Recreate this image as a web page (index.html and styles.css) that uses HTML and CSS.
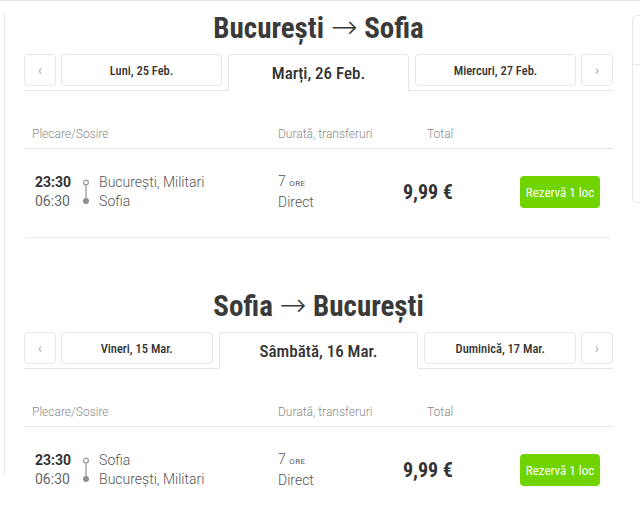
FILE: index.html
```html
<!DOCTYPE html>
<html lang="ro">
<head>
    <meta charset="UTF-8">
    <meta name="viewport" content="width=device-width, initial-scale=1.0">
    <title>Bilete autocar</title>
    <link rel="stylesheet" href="styles.css">
</head>
<body>
    <div class="page">
        <div class="side-left"></div>

        <main class="trips">
            <section class="leg">
                <h2 class="leg-title">București <span class="arrow">→</span> Sofia</h2>
                <nav class="days">
                    <button class="day-arrow">‹</button>
                    <button class="day">Luni, 25 Feb.</button>
                    <div class="day day-active">Marți, 26 Feb.</div>
                    <button class="day">Miercuri, 27 Feb.</button>
                    <button class="day-arrow">›</button>
                </nav>
                <div class="results-head">
                    <span>Plecare/Sosire</span>
                    <span>Durată, transferuri</span>
                    <span class="head-total">Total</span>
                </div>
                <div class="result">
                    <div class="route">
                        <div class="times"><b>23:30</b><span>06:30</span></div>
                        <svg class="route-icon" width="8" height="28" viewBox="0 0 8 28">
                            <circle cx="4" cy="4.5" r="2.4" fill="none" stroke="#9a9a9a" stroke-width="1.2"/>
                            <line x1="4" y1="7" x2="4" y2="21" stroke="#9a9a9a" stroke-width="1.3"/>
                            <circle cx="4" cy="23" r="3" fill="#8f8f8f"/>
                        </svg>
                        <div class="stations"><span>București, Militari</span><span>Sofia</span></div>
                    </div>
                    <div class="duration">
                        <span>7 <small>ore</small></span>
                        <span>Direct</span>
                    </div>
                    <div class="price">9,99 €</div>
                    <button class="book">Rezervă 1 loc</button>
                </div>
            </section>

            <section class="leg">
                <h2 class="leg-title">Sofia <span class="arrow">→</span> București</h2>
                <nav class="days">
                    <button class="day-arrow">‹</button>
                    <button class="day">Vineri, 15 Mar.</button>
                    <div class="day day-active">Sâmbătă, 16 Mar.</div>
                    <button class="day">Duminică, 17 Mar.</button>
                    <button class="day-arrow">›</button>
                </nav>
                <div class="results-head">
                    <span>Plecare/Sosire</span>
                    <span>Durată, transferuri</span>
                    <span class="head-total">Total</span>
                </div>
                <div class="result">
                    <div class="route">
                        <div class="times"><b>23:30</b><span>06:30</span></div>
                        <svg class="route-icon" width="8" height="28" viewBox="0 0 8 28">
                            <circle cx="4" cy="4.5" r="2.4" fill="none" stroke="#9a9a9a" stroke-width="1.2"/>
                            <line x1="4" y1="7" x2="4" y2="21" stroke="#9a9a9a" stroke-width="1.3"/>
                            <circle cx="4" cy="23" r="3" fill="#8f8f8f"/>
                        </svg>
                        <div class="stations"><span>Sofia</span><span>București, Militari</span></div>
                    </div>
                    <div class="duration">
                        <span>7 <small>ore</small></span>
                        <span>Direct</span>
                    </div>
                    <div class="price">9,99 €</div>
                    <button class="book">Rezervă 1 loc</button>
                </div>
            </section>
        </main>

        <aside class="side-right">
            <div class="side-right-top"></div>
        </aside>
    </div>
</body>
</html>
```

FILE: styles.css
```css
body {
    margin: 0;
    background-color: #fff;
    font-family: Roboto, 'Liberation Sans', sans-serif;
    color: #333;
    overflow: hidden;
}

.page {
    display: flex;
    align-items: flex-start;
    border-top: 1px solid #e4e4e4;
    width: 640px;
    height: 505px;
    overflow: hidden;
}

.side-left {
    flex: none;
    width: 4px;
    height: 463px;
    margin-top: 12px;
    border-right: 1px solid #ececec;
}

.trips {
    flex: none;
    width: 589px;
    margin-left: 19px;
}

.leg {
    padding-top: 10px;
}

.leg + .leg {
    margin-top: 41px;
}

.leg-title {
    margin: 0;
    text-align: center;
    font-family: 'Roboto Condensed', Roboto, sans-serif;
    font-stretch: condensed;
    font-size: 29px;
    line-height: 34px;
    font-weight: 700;
    color: #3a3a3a;
}

.leg-title .arrow {
    font-family: 'DejaVu Sans', sans-serif;
    font-stretch: normal;
    font-weight: 200;
    font-size: 32px;
    line-height: 0;
}

/* date tabs */
.days {
    display: flex;
    align-items: flex-start;
    gap: 5px;
    margin-top: 9px;
    border-bottom: 1px solid #e6e6e6;
}

.days button {
    font-family: 'Roboto Condensed', Roboto, sans-serif;
    font-stretch: condensed;
    background-color: #fff;
    border: 1px solid #e6e6e6;
    border-radius: 4px;
    height: 32px;
    padding: 0;
    cursor: pointer;
    color: #333;
}

.day-arrow {
    flex: none;
    width: 32px;
    font-size: 14px;
    color: #aaa !important;
}

.day {
    flex: 1 1 0;
    font-size: 12.5px;
    font-weight: 500;
}

.day-active {
    flex: none;
    min-width: 181px;
    height: 37px;
    margin: 0 1px -1px;
    padding: 0 40px;
    display: flex;
    align-items: center;
    justify-content: center;
    box-sizing: border-box;
    background-color: #fff;
    border: 1px solid #e6e6e6;
    border-bottom: none;
    border-radius: 4px 4px 0 0;
    font-family: 'Roboto Condensed', Roboto, sans-serif;
    font-stretch: condensed;
    font-size: 17px;
    font-weight: 500;
    color: #333;
}

/* results */
.results-head {
    display: grid;
    grid-template-columns: 246px 125px 1fr;
    padding: 35px 0 6px 8px;
    border-bottom: 1px solid #e6e6e6;
    font-size: 12px;
    line-height: 16px;
    font-weight: 300;
    color: #8a8a8a;
}

.head-total {
    padding-left: 24px;
}

.result {
    display: grid;
    grid-template-columns: 246px 125px 1fr auto;
    align-items: center;
    margin: 0 3px 0 2px;
    padding: 23px 10px 25px 6px;
    border-bottom: 1px solid #ececec;
}

.route {
    display: flex;
    align-items: center;
    padding-left: 3px;
}

.times,
.stations,
.duration {
    display: flex;
    flex-direction: column;
    font-size: 14px;
    line-height: 19px;
    color: #666;
}

.times b {
    color: #333;
}

.route-icon {
    margin: 0 9px 0 11px;
}

.stations,
.duration {
    font-weight: 300;
    color: #555;
}

.duration small {
    font-size: 8px;
    text-transform: uppercase;
    letter-spacing: 0.5px;
    font-weight: 400;
}

.price {
    font-family: 'Roboto Condensed', Roboto, sans-serif;
    font-stretch: condensed;
    font-size: 20px;
    font-weight: 700;
    color: #333;
}

.book {
    height: 32px;
    width: 80px;
    padding: 0;
    border: none;
    border-radius: 4px;
    background-color: #6fd400;
    color: #fff;
    font-family: 'Roboto Condensed', Roboto, sans-serif;
    font-stretch: condensed;
    font-size: 13px;
    font-weight: 400;
    cursor: pointer;
}

.book:hover {
    background-color: #62bd00;
}

/* sidebar */
.side-right {
    flex: none;
    width: 200px;
    height: 186px;
    margin: 14px 0 0 19px;
    border: 1px solid #e6e6e6;
    border-radius: 5px;
}

.side-right-top {
    height: 48px;
    border-bottom: 1px solid #e6e6e6;
}
```
